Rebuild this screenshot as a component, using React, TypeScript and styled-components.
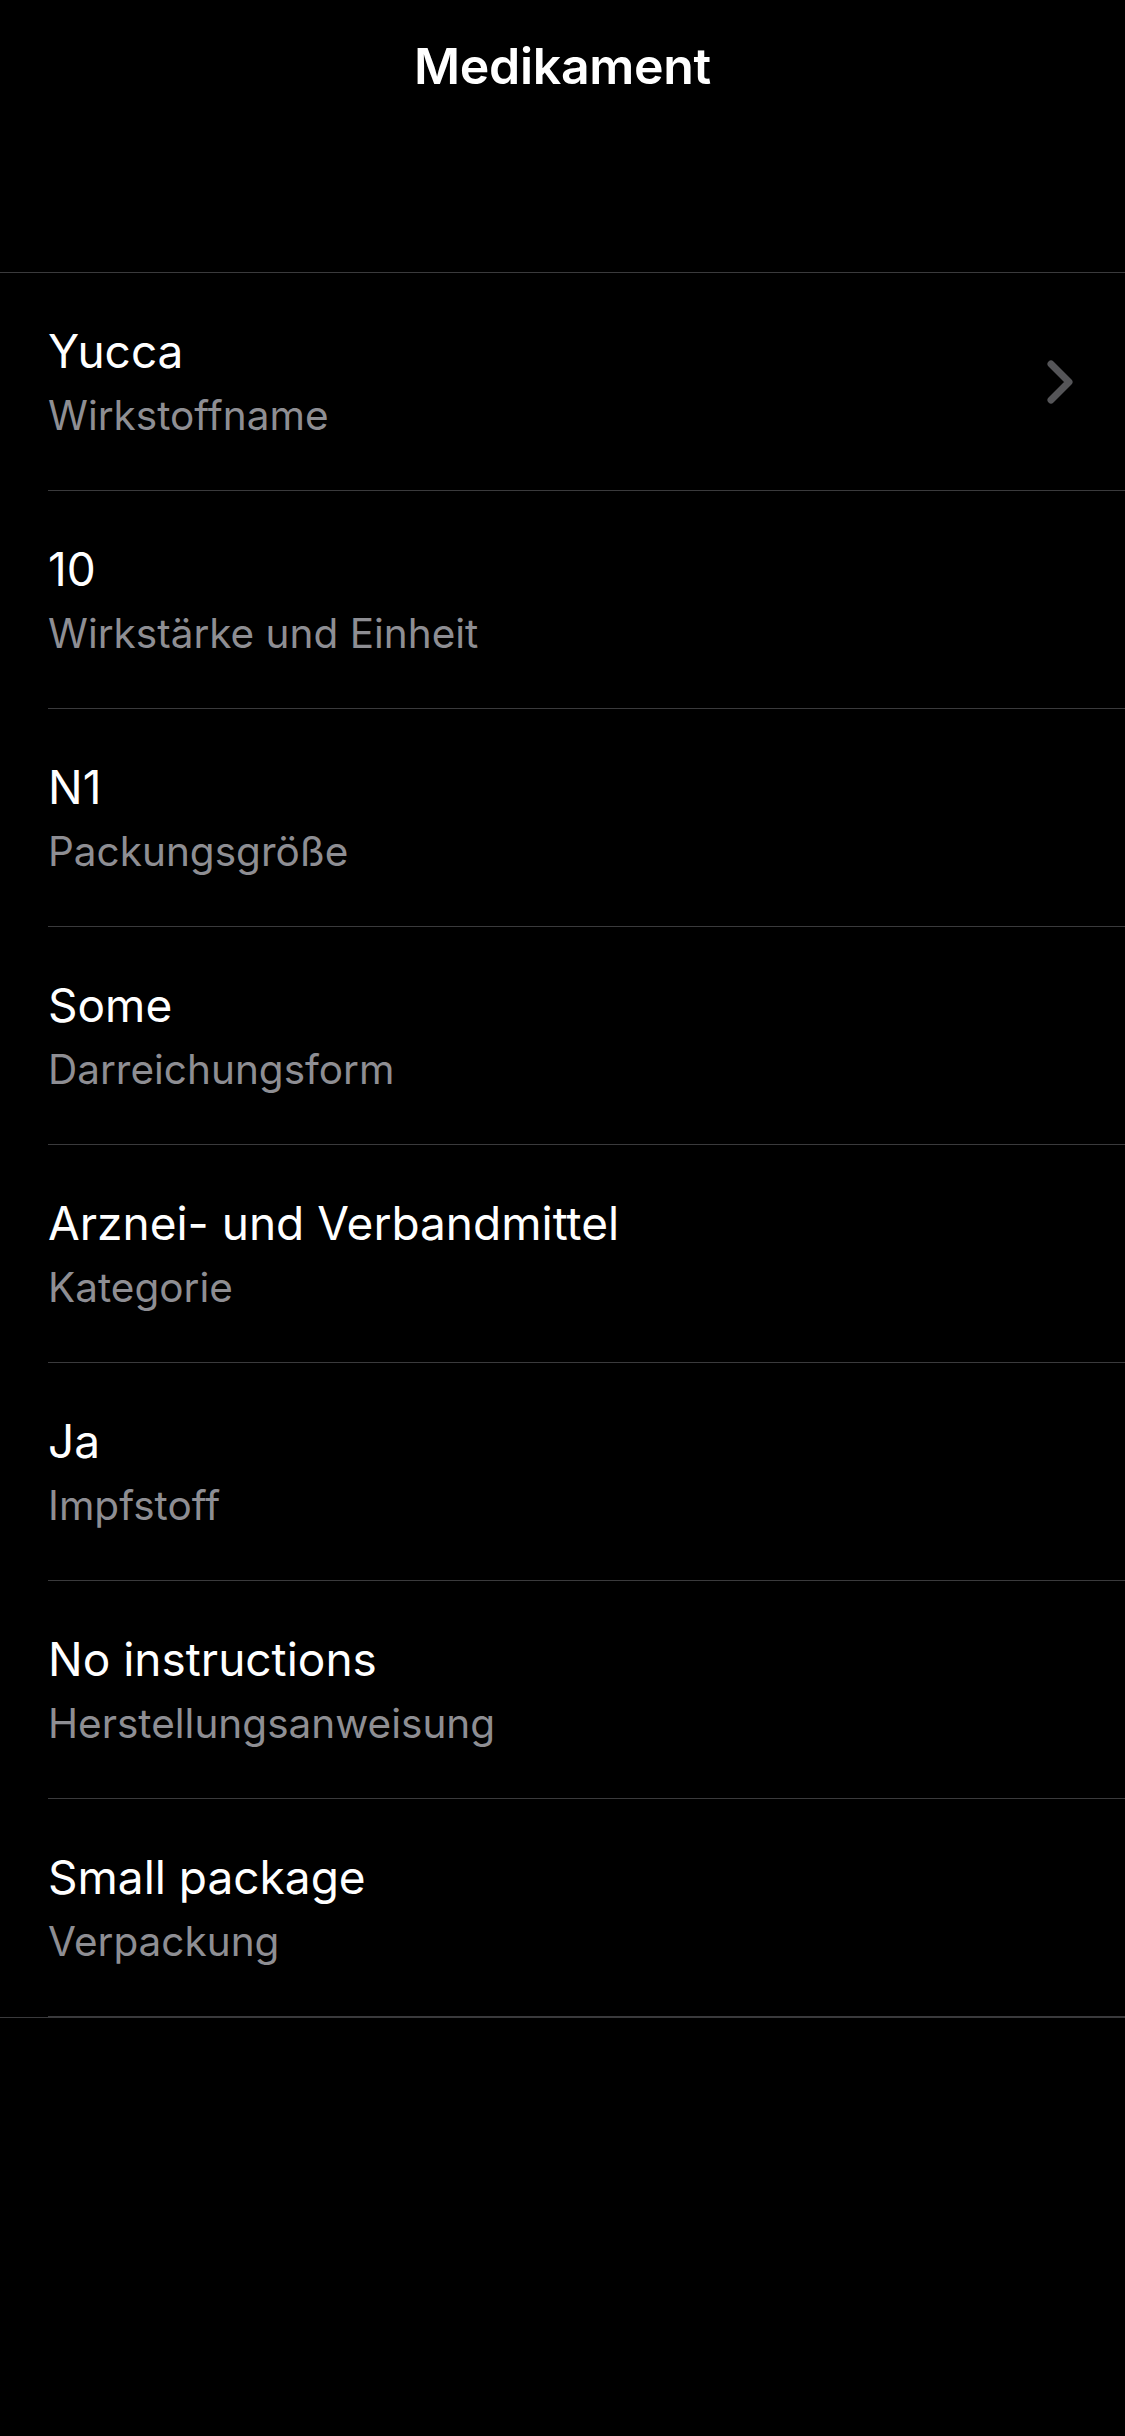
import React from "react";
import styled, { createGlobalStyle } from "styled-components";

const Global = createGlobalStyle`
  html, body {
    margin: 0;
    padding: 0;
    background: #000;
  }
  body {
    font-family: Inter, "Noto Sans", sans-serif;
    -webkit-font-smoothing: antialiased;
  }
`;

const Screen = styled.div`
  width: 1125px;
  min-height: 2436px;
  background: #000;
  color: #fff;
  display: flex;
  flex-direction: column;
`;

const Header = styled.header`
  height: 273px;
  box-sizing: border-box;
  padding-top: 36px;
  display: flex;
  justify-content: center;
  align-items: flex-start;
  border-bottom: 1.5px solid #3a3a3c;
`;

const Title = styled.h1`
  margin: 0;
  font-size: 50px;
  line-height: 60px;
  font-weight: 600;
  letter-spacing: -0.3px;
`;

const List = styled.ul`
  list-style: none;
  margin: 0;
  padding: 0;
  border-bottom: 1px solid #3a3a3c;
`;

const Row = styled.li`
  height: 218px;
  box-sizing: border-box;
  padding-left: 48px;
  display: flex;
  align-items: stretch;
`;

const RowInner = styled.div<{ $last?: boolean }>`
  flex: 1;
  display: flex;
  align-items: center;
  padding-right: 52px;
  border-bottom: ${(p) => (p.$last ? "1px" : "1.5px")} solid #3a3a3c;
`;

const Texts = styled.div`
  flex: 1;
  display: flex;
  flex-direction: column;
  gap: 12px;
`;

const Value = styled.div`
  font-size: 46px;
  line-height: 56px;
  font-weight: 400;
  color: #fff;
`;

const Label = styled.div`
  font-size: 40.5px;
  line-height: 50px;
  font-weight: 400;
  color: #8e8e93;
`;

const Chevron = () => (
  <svg width="26" height="44" viewBox="0 0 26 44" fill="none">
    <polyline
      points="4,4 22,22 4,40"
      stroke="#555558"
      strokeWidth="7"
      strokeLinecap="round"
      strokeLinejoin="round"
    />
  </svg>
);

const items = [
  { value: "Yucca", label: "Wirkstoffname", chevron: true },
  { value: "10", label: "Wirkstärke und Einheit" },
  { value: "N1", label: "Packungsgröße" },
  { value: "Some", label: "Darreichungsform" },
  { value: "Arznei- und Verbandmittel", label: "Kategorie" },
  { value: "Ja", label: "Impfstoff" },
  { value: "No instructions", label: "Herstellungsanweisung" },
  { value: "Small package", label: "Verpackung" },
];

export default function App() {
  return (
    <>
      <Global />
      <Screen>
        <Header>
          <Title>Medikament</Title>
        </Header>
        <List>
          {items.map((it, i) => (
            <Row key={it.label}>
              <RowInner $last={i === items.length - 1}>
                <Texts>
                  <Value>{it.value}</Value>
                  <Label>{it.label}</Label>
                </Texts>
                {it.chevron && <Chevron />}
              </RowInner>
            </Row>
          ))}
        </List>
      </Screen>
    </>
  );
}
